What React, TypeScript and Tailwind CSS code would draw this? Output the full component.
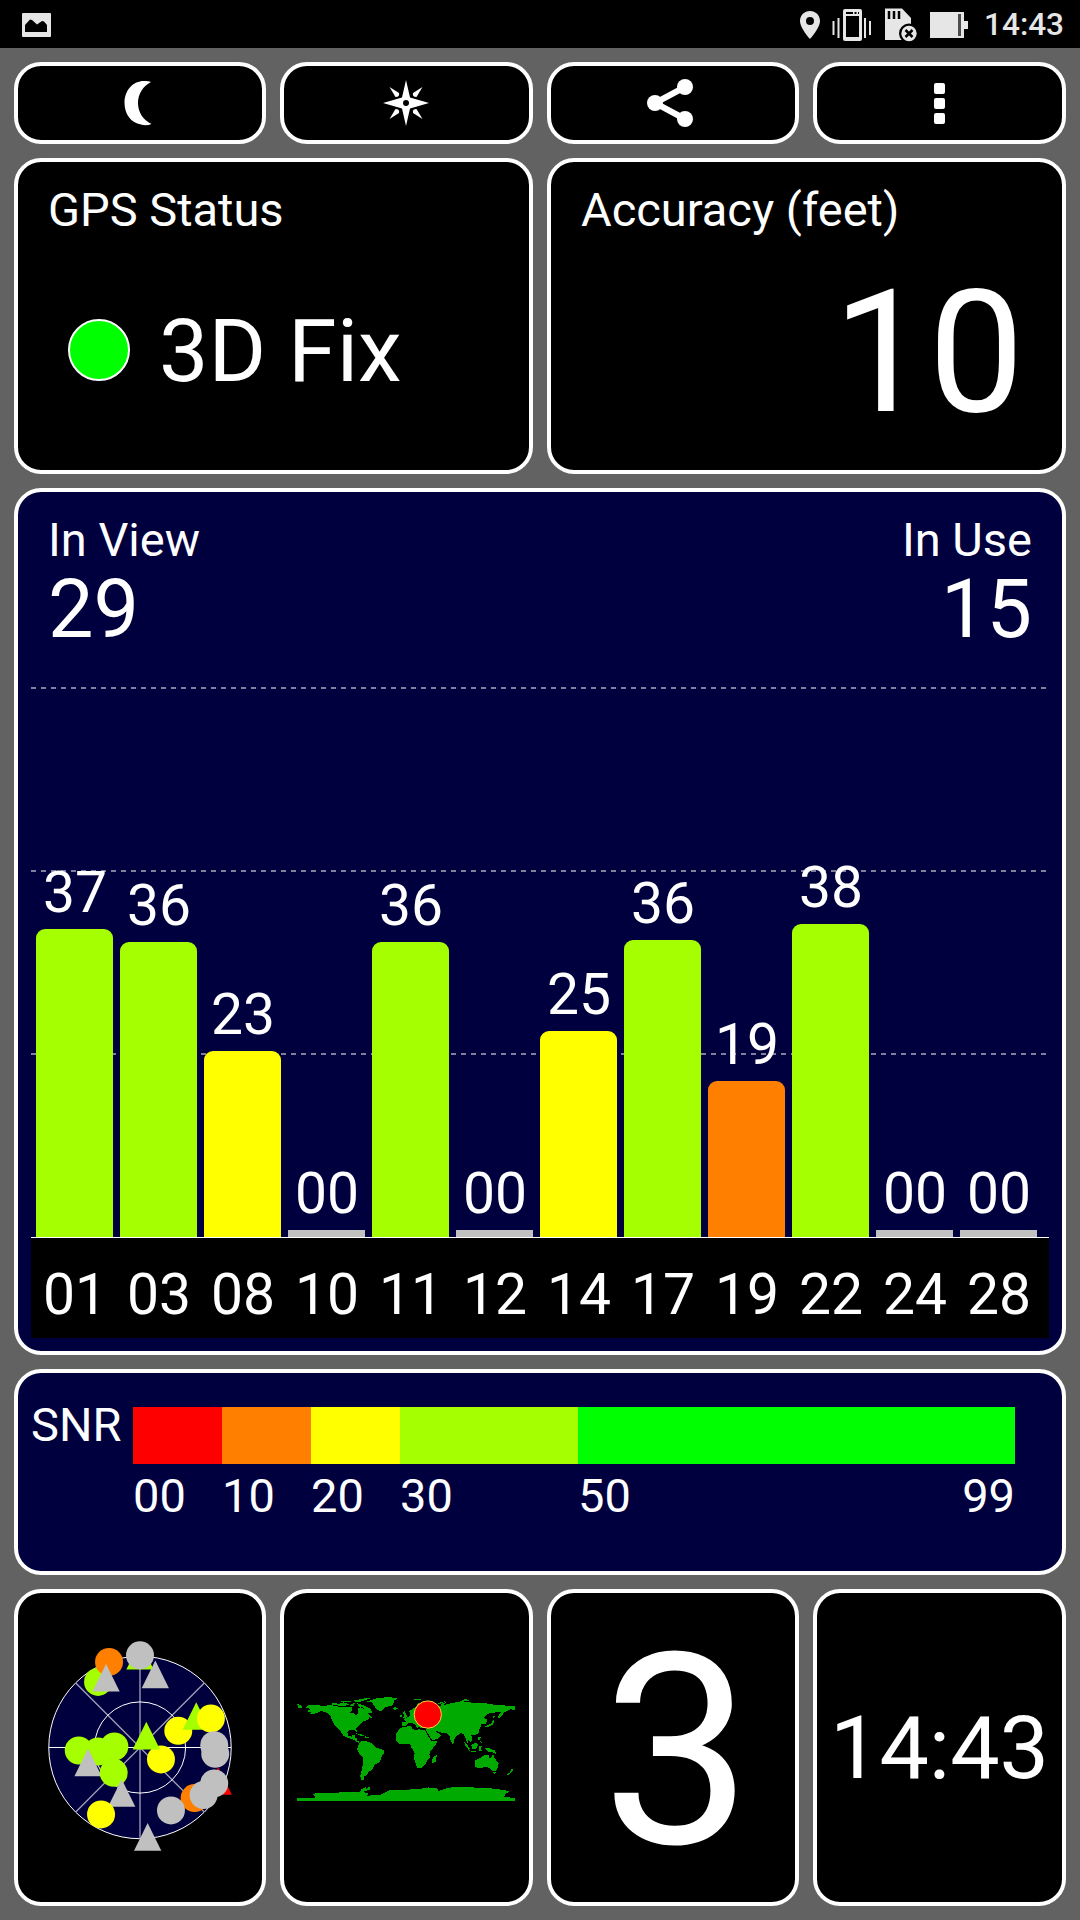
import type { ReactNode } from "react";

const satellites = [
  { id: "01", snr: "37", height: 308, color: "bg-[#a5ff00]" },
  { id: "03", snr: "36", height: 295, color: "bg-[#a5ff00]" },
  { id: "08", snr: "23", height: 186, color: "bg-[#ffff00]" },
  { id: "10", snr: "00", height: 7, color: "bg-[#c0c0c0]" },
  { id: "11", snr: "36", height: 295, color: "bg-[#a5ff00]" },
  { id: "12", snr: "00", height: 7, color: "bg-[#c0c0c0]" },
  { id: "14", snr: "25", height: 206, color: "bg-[#ffff00]" },
  { id: "17", snr: "36", height: 297, color: "bg-[#a5ff00]" },
  { id: "19", snr: "19", height: 156, color: "bg-[#ff8000]" },
  { id: "22", snr: "38", height: 313, color: "bg-[#a5ff00]" },
  { id: "24", snr: "00", height: 7, color: "bg-[#c0c0c0]" },
  { id: "28", snr: "00", height: 7, color: "bg-[#c0c0c0]" },
];

const snrRanges = [
  { from: "00", color: "bg-[#ff0000]", width: "w-[89px]" },
  { from: "10", color: "bg-[#ff8000]", width: "w-[89px]" },
  { from: "20", color: "bg-[#ffff00]", width: "w-[89px]" },
  { from: "30", color: "bg-[#a5ff00]", width: "w-[178px]" },
  { from: "50", color: "bg-[#00ff00]", width: "w-[437px]", to: "99" },
];

const LIME = "#a5ff00";
const GRAY = "#c0c0c0";

// order matters, later markers cover earlier ones
const skyMarkers = [
  { shape: "triangle", x: 330, y: 108, color: LIME },
  { shape: "circle", x: 204, y: 186, color: LIME },
  { shape: "circle", x: 237, y: 126, color: "#ff8000" },
  { shape: "circle", x: 330, y: 106, color: GRAY },
  { shape: "triangle", x: 228, y: 174, color: GRAY },
  { shape: "triangle", x: 376, y: 164, color: GRAY },
  { shape: "circle", x: 445, y: 333, color: "#ffff00" },
  { shape: "triangle", x: 499, y: 289, color: LIME },
  { shape: "circle", x: 543, y: 296, color: "#ffff00" },
  { shape: "circle", x: 393, y: 419, color: "#ffff00" },
  { shape: "triangle", x: 349, y: 348, color: LIME },
  { shape: "circle", x: 146, y: 392, color: LIME },
  { shape: "circle", x: 204, y: 395, color: LIME },
  { shape: "circle", x: 253, y: 380, color: LIME },
  { shape: "triangle", x: 174, y: 428, color: GRAY },
  { shape: "circle", x: 251, y: 459, color: LIME },
  { shape: "triangle", x: 275, y: 520, color: GRAY },
  { shape: "circle", x: 213, y: 584, color: "#ffff00" },
  { shape: "circle", x: 553, y: 376, color: GRAY },
  { shape: "circle", x: 556, y: 402, color: GRAY },
  { shape: "triangle", x: 565, y: 484, color: "#ff0000" },
  { shape: "circle", x: 494, y: 535, color: "#ff8000" },
  { shape: "circle", x: 521, y: 526, color: GRAY },
  { shape: "circle", x: 553, y: 491, color: GRAY },
  { shape: "circle", x: 423, y: 572, color: GRAY },
  { shape: "triangle", x: 353, y: 652, color: GRAY },
];

interface PanelProps {
  className?: string;
  children: ReactNode;
}

const Panel = ({ className = "", children }: PanelProps) => (
  <div className={`rounded-[27px] border-4 border-white ${className}`}>
    {children}
  </div>
);

const StatusBar = () => (
  <div className="flex h-12 items-center justify-between bg-black pt-[2px] pl-[22px] pr-[16px] text-[#e6e6e6]">
    <svg width="29" height="24" viewBox="0 0 29 24">
      <rect width="29" height="24" rx="1" fill="#e6e6e6" />
      <path d="M3 19V12L8 6.5L10 7L15 11.5L20 8L22 8.500L25 12V19Z" fill="#000" />
    </svg>
    <div className="flex items-center">
      <svg width="20" height="28" viewBox="0 0 20 28" fill="currentColor">
        <path
          fillRule="evenodd"
          d="M10 0C4.400 0 0 4.300 0 10c0 7 10 18 10 18s10-11 10-18C20 4.300 15.600 0 10 0Zm0 6a4 4 0 1 1 0 8 4 4 0 0 1 0-8Z"
        />
      </svg>
      <svg className="ml-3" width="39" height="34" viewBox="0 0 39 34">
        <rect x="11" y="1" width="19" height="32" rx="2" fill="#e6e6e6" />
        <rect x="14" y="8" width="13" height="21" fill="#000" />
        <path d="M14 5H21M22.500 5H24.500M26 5H27" stroke="#000" strokeWidth="2" />
        <path
          d="M1.500 13V27M6.500 10V30M33 10V30M38 13V27"
          stroke="#e6e6e6"
          strokeWidth="2"
        />
      </svg>
      <svg className="ml-[14px]" width="32" height="34" viewBox="0 0 32 34">
        <path d="M0 0.500H17L26 10V32H0Z" fill="#e6e6e6" />
        <path d="M4 3V11M9 3V11M14 3V11" stroke="#000" strokeWidth="2.500" />
        <circle cx="24" cy="25.500" r="10" fill="#000" />
        <circle cx="24" cy="25.500" r="7.700" fill="#e6e6e6" />
        <path d="M20.500 22L27.500 29M27.500 22L20.500 29" stroke="#000" strokeWidth="2.500" />
      </svg>
      <svg className="ml-[13px]" width="38" height="26" viewBox="0 0 38 26">
        <path d="M0 0H34V9H38V17H34V26H0Z" fill="#e6e6e6" />
        <rect x="28" y="2" width="3" height="22" fill="#4d4d4d" />
      </svg>
      <span className="ml-[16px] text-[31.5px] leading-none font-medium">14:43</span>
    </div>
  </div>
);

const Toolbar = () => (
  <div className="grid h-[82px] grid-cols-[252px_253px_252px_253px] gap-[14px]">
    <Panel className="flex items-center justify-center bg-black">
      <svg width="46" height="46" viewBox="0 0 46 46" fill="#fff">
        <path d="M34 2C26 6 21 14 21 23C21 32 26 40 34.500 44C31 45.500 27 45.500 24 44.500C14 43 7.500 34 7.500 23C7.500 10 16 1 27 1C30 1 32 1.300 34 2Z" />
      </svg>
    </Panel>
    <Panel className="flex items-center justify-center bg-black pr-[1px]">
      <svg width="46" height="46" viewBox="0 0 46 46">
        <path
          d="M23 0L27 17.500L46 23L27 28.500L23 46L19 28.500L0 23L19 17.500Z"
          fill="#fff"
        />
        <g fill="#fff">
          <path d="M6.500 7L16 13Q17 17 12.500 17Z" />
          <path d="M39.500 7L30 13Q29 17 33.500 17Z" />
          <path d="M6.500 39L16 33Q17 29 12.500 29Z" />
          <path d="M39.500 39L30 33Q29 29 33.500 29Z" />
        </g>
        <circle cx="23" cy="23" r="3" fill="#000" />
      </svg>
    </Panel>
    <Panel className="flex items-center justify-center bg-black pr-[6px]">
      <svg width="46" height="48" viewBox="0 0 46 48" fill="#fff">
        <path d="M38 8L8 24L38 40" fill="none" stroke="#fff" strokeWidth="6" />
        <circle cx="8" cy="24" r="8" />
        <circle cx="38" cy="8" r="8" />
        <circle cx="38" cy="40" r="8" />
      </svg>
    </Panel>
    <Panel className="flex flex-col items-center justify-center gap-[4px] bg-black">
      <span className="size-[11px] rounded-[2px] bg-white" />
      <span className="size-[11px] rounded-[2px] bg-white" />
      <span className="size-[11px] rounded-[2px] bg-white" />
    </Panel>
  </div>
);

const SignalChart = () => (
  <Panel className="h-[867px] bg-[#00003e] px-[13px]">
    <div className="flex h-[195px] justify-between px-[17px] pt-6">
      <div>
        <p className="text-[47px] leading-none">In View</p>
        <p className="mt-[6px] text-[81px] leading-none">29</p>
      </div>
      <div className="text-right">
        <p className="text-[47px] leading-none">In Use</p>
        <p className="mt-[6px] text-[81px] leading-none">15</p>
      </div>
    </div>

    <div className="relative h-[550px]">
      <svg className="absolute inset-0" width="1018" height="550">
        <path
          d="M0 1H1016M0 184H1016M0 367H1016"
          stroke="#7f7f9e"
          strokeWidth="2"
          strokeDasharray="5 5"
        />
      </svg>
      <div className="relative flex h-full items-end gap-[7px] pl-[5px]">
        {satellites.map((sat) => (
          <div key={sat.id} className="w-[77px]">
            <p className="mb-[8px] pl-px text-center text-[57px] leading-none">
              {sat.snr}
            </p>
            <div
              className={`${sat.color} ${sat.height > 7 ? "rounded-t-[9px]" : ""}`}
              style={{ height: sat.height }}
            />
          </div>
        ))}
      </div>
    </div>

    <div className="flex h-[101px] gap-[7px] border-t border-white bg-black pt-7 pl-[5px]">
      {satellites.map((sat) => (
        <p key={sat.id} className="w-[77px] pl-px text-center text-[57px] leading-none">
          {sat.id}
        </p>
      ))}
    </div>
  </Panel>
);

const SnrLegend = () => (
  <Panel className="flex h-[206px] bg-[#00003e] pt-[34px] pl-[13px]">
    <p className="-mt-[6px] w-[102px] text-[47px] leading-none">SNR</p>
    <div className="flex">
      {snrRanges.map((range) => (
        <div key={range.from} className={range.width}>
          <div className={`h-[57px] ${range.color}`} />
          <div className="mt-[8px] flex justify-between text-[47px] leading-none">
            <span>{range.from}</span>
            {range.to && <span>{range.to}</span>}
          </div>
        </div>
      ))}
    </div>
  </Panel>
);

const SkyView = () => (
  <svg width="220" height="255" viewBox="0 0 660 766">
    <circle cx="330" cy="383" r="274" fill="#00003e" stroke="#fff" strokeWidth="3" />
    <path
      d="M137 189L523 577M523 189L137 577M330 109V657"
      stroke="#a0a0b8"
      strokeWidth="4"
    />
    <circle cx="330" cy="383" r="137" fill="none" stroke="#fff" strokeWidth="3" />
    <path d="M56 383H604" stroke="#fff" strokeWidth="3" />
    {skyMarkers.map(({ shape, x, y, color }, i) =>
      shape === "circle" ? (
        <circle key={i} cx={x} cy={y} r="42" fill={color} />
      ) : (
        <path key={i} d={`M${x} ${y - 42}L${x + 41} ${y + 41}H${x - 41}Z`} fill={color} />
      )
    )}
  </svg>
);

const WorldMap = () => (
  <svg width="243" height="130" viewBox="0 8 730 389">
    <g fill="#00aa00" shapeRendering="crispEdges">
      {/* americas */}
      <path d="M62 80L70 74L92 72L110 76L140 74L165 79L200 80L202 90L196 96L206 98L214 106L220 96L220 84L228 80L236 86L244 94L254 104L264 114L254 110L248 118L236 122L228 130L222 136L214 144L216 154L210 150L194 149L187 156L190 167L200 168L204 162L214 162L208 170L216 174L218 182L228 184L220 187L206 178L190 172L175 165L166 150L156 142L145 128L138 112L136 104L122 94L108 92L96 98L70 102L80 96L66 92L76 86Z" />
      <path d="M222 190L232 180L250 184L262 190L272 200L298 210L298 218L290 228L288 238L282 246L270 252L262 268L252 274L244 284L236 290L240 300L230 298L226 286L232 264L236 232L224 222L216 206L220 198Z" />
      <path d="M256 60L272 54L310 49L338 53L328 60L324 74L300 80L288 92L276 88L268 76L262 66L242 64Z" />
      <path d="M140 68L156 66L160 74L142 74ZM160 70L180 66L192 72L176 77L160 76ZM198 70L210 68L206 76L196 76ZM216 68L236 74L256 84L262 96L250 98L236 88L240 82L222 78ZM168 62L190 60L200 64L176 66ZM206 60L228 56L248 52L256 54L232 62L214 66ZM212 158L232 162L242 168L228 166ZM240 168L254 170L252 174L240 172ZM36 70L48 74L52 82L40 82Z" />
      {/* europe and asia */}
      <path d="M350 136L350 124L364 124L358 116L376 106L376 98L372 92L392 80L400 68L420 64L468 78L470 70L484 64L474 74L500 68L530 62L560 66L600 68L640 74L690 76L690 88L676 86L662 94L656 98L650 108L640 114L642 102L650 94L630 96L614 98L602 106L596 112L606 116L608 122L600 132L590 130L588 140L582 148L584 156L570 164L560 164L562 178L558 184L550 176L548 188L542 172L536 160L528 158L518 164L508 176L508 186L502 190L496 176L494 164L484 158L468 156L452 150L460 158L470 164L460 174L444 180L436 170L424 150L426 142L410 143L402 138L398 143L390 132L380 127L370 127L364 136Z" />
      <path d="M354 96L360 92L364 102L368 110L354 114L358 104ZM345 104L352 102L350 110L344 110ZM320 82L332 80L340 84L330 88ZM386 56L398 54L412 56L396 60ZM456 70L470 64L484 62L466 70ZM526 58L544 56L556 62L540 62Z" />
      <path d="M346 142L378 136L382 144L396 150L402 146L422 150L430 168L440 182L458 180L452 194L438 210L434 222L436 232L426 242L422 252L410 262L398 264L392 248L386 230L390 218L380 202L376 192L358 190L342 190L333 178L334 160Z" />
      <path d="M448 228L456 224L452 244L442 248L442 236Z" />
      {/* pacific */}
      <path d="M536 180L546 190L556 206L552 208L542 196ZM560 194L572 186L580 192L574 206L562 206ZM554 210L572 212L582 216L560 214ZM582 196L592 196L588 204L592 212L582 212ZM580 168L588 170L586 180L580 178ZM586 182L594 184L592 190ZM600 202L616 204L630 210L636 222L624 216L610 214ZM626 118L630 124L622 134L610 140L598 140L612 132L620 128ZM624 106L630 108L624 116Z" />
      <path d="M572 240L584 234L592 228L600 224L612 222L614 232L620 232L625 220L630 234L642 248L640 262L632 272L620 270L616 262L600 260L584 264L572 260ZM626 276L634 276L630 282ZM680 264L686 268L680 276L670 286L666 282L676 276Z" />
      {/* antarctica */}
      <path d="M36 363L36 354L72 352L92 352L84 340L110 337L150 338L180 334L226 335L230 326L246 318L242 326L256 318L254 328L236 334L250 340L246 346L290 342L318 328L360 328L400 326L430 321L456 323L462 332L490 322L520 319L560 321L600 322L640 326L676 332L664 340L658 348L690 354L690 363Z" />
    </g>
    <circle cx="429" cy="102" r="41" fill="#ff0000" stroke="#ffd040" strokeWidth="3" />
  </svg>
);

export default function App() {
  return (
    <div className="flex h-[1920px] w-[1080px] flex-col bg-[#626262] font-['Roboto',sans-serif] text-white">
      <StatusBar />
      <div className="flex flex-col gap-[14px] p-[14px]">
        <Toolbar />

        <div className="grid h-[316px] grid-cols-2 gap-[14px]">
          <Panel className="bg-black px-[30px] pt-6">
            <h2 className="text-[47px] leading-none">GPS Status</h2>
            <div className="mt-[74px] flex items-center pl-[20px]">
              <span className="mb-[2px] size-[62px] rounded-full border-2 border-white bg-[#00ff00]" />
              <span className="ml-[29px] text-[88px] leading-none">3D Fix</span>
            </div>
          </Panel>
          <Panel className="bg-black px-[30px] pt-6">
            <h2 className="text-[47px] leading-none">Accuracy (feet)</h2>
            <p className="mt-[35px] pr-[8px] text-right text-[170px] leading-none">10</p>
          </Panel>
        </div>

        <SignalChart />
        <SnrLegend />

        <div className="grid h-[317px] grid-cols-[252px_253px_252px_253px] gap-[14px]">
          <Panel className="flex items-center justify-center bg-black">
            <SkyView />
          </Panel>
          <Panel className="flex items-center justify-center bg-black">
            <WorldMap />
          </Panel>
          <Panel className="flex items-center justify-center bg-black pt-[8px] pl-[8px] text-[267px] leading-none">
            3
          </Panel>
          <Panel className="flex items-center justify-center bg-black text-[88px] leading-none">
            14:43
          </Panel>
        </div>
      </div>
    </div>
  );
}
